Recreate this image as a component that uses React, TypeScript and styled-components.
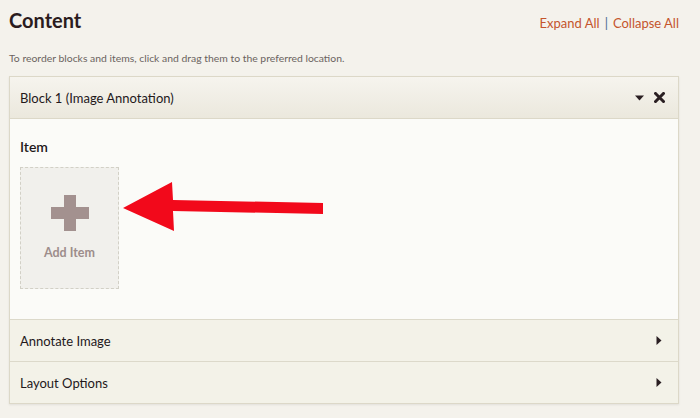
import styled, { createGlobalStyle } from "styled-components";

const GlobalStyle = createGlobalStyle`
  html, body {
    margin: 0;
    padding: 0;
    background: #f4f2ec;
    font-family: Lato, "Open Sans", sans-serif;
  }
`;

const Page = styled.div`
  width: 700px;
  height: 418px;
  box-sizing: border-box;
  padding: 5px 21px 0 9px;
  overflow: hidden;
`;

const TopBar = styled.div`
  display: flex;
  justify-content: space-between;
  align-items: baseline;
`;

const Title = styled.h1`
  margin: 0;
  font-size: 20px;
  line-height: 30px;
  font-weight: 700;
  color: #2b1c1e;
`;

const Links = styled.div`
  font-size: 13px;
  color: #c4552c;
  display: flex;
  gap: 5px;
`;

const Link = styled.a`
  color: inherit;
  text-decoration: none;
  cursor: pointer;
`;

const Divider = styled.span`
  color: #4a6a8c;
`;

const Hint = styled.p`
  margin: 16px 0 0;
  font-size: 10.4px;
  line-height: 14px;
  color: #6b6360;
`;

const Panel = styled.div`
  margin-top: 11px;
  border: 1px solid #dcd8c8;
  box-shadow: 0 1px 2px rgba(0, 0, 0, 0.08);
`;

const PanelHeader = styled.div<{ $flat?: boolean }>`
  display: flex;
  align-items: center;
  justify-content: space-between;
  height: 41px;
  padding: 0 ${(p) => (p.$flat ? 16 : 13)}px 0 10px;
  font-size: 13px;
  color: #23181b;
  background: ${(p) =>
    p.$flat ? "#f3f2e8" : "linear-gradient(#f6f4ee, #ebe8dd)"};
  border-top: ${(p) => (p.$flat ? "1px solid #dcd9ca" : "none")};
  border-bottom: ${(p) => (p.$flat ? "none" : "1px solid #dcd8c8")};
`;

const Controls = styled.div`
  display: flex;
  align-items: center;
  gap: 10px;
`;

const Body = styled.div`
  position: relative;
  height: 200px;
  box-sizing: border-box;
  padding: 19px 10px 0;
  background: #fbfbf8;
`;

const ItemLabel = styled.div`
  font-size: 14px;
  line-height: 18px;
  font-weight: 600;
  color: #23181b;
`;

const AddItem = styled.div`
  margin-top: 11px;
  width: 99px;
  height: 122px;
  box-sizing: border-box;
  border: 1px dashed #d2d0c6;
  background: #f1f0ec;
  display: flex;
  flex-direction: column;
  align-items: center;
  padding-top: 27px;
  gap: 14px;
  font-size: 12.5px;
  font-weight: 700;
  color: #9d8d8b;
`;

const Arrow = styled.svg`
  position: absolute;
  left: 110px;
  top: 60px;
`;

const CaretDown = () => (
  <svg width="9" height="6" viewBox="0 0 9 6">
    <path d="M0 0.5h9L4.5 5.5z" fill="#2a1f22" />
  </svg>
);

const Close = () => (
  <svg width="11" height="11" viewBox="0 0 11 11">
    <path
      d="M1.5 1.5l8 8M9.5 1.5l-8 8"
      stroke="#2a1f22"
      strokeWidth="3"
      strokeLinecap="square"
    />
  </svg>
);

const CaretRight = () => (
  <svg width="6" height="9" viewBox="0 0 6 9">
    <path d="M0.5 0v9L5.5 4.5z" fill="#2a1f22" />
  </svg>
);

const Plus = () => (
  <svg width="38" height="36" viewBox="0 0 38 36">
    <path d="M13 0h12v12h13v12H25v12H13V24H0V12h13z" fill="#a3918f" />
  </svg>
);

export default function App() {
  return (
    <>
      <GlobalStyle />
      <Page>
        <TopBar>
          <Title>Content</Title>
          <Links>
            <Link>Expand All</Link>
            <Divider>|</Divider>
            <Link>Collapse All</Link>
          </Links>
        </TopBar>
        <Hint>To reorder blocks and items, click and drag them to the preferred location.</Hint>
        <Panel>
          <PanelHeader>
            <span>Block 1 (Image Annotation)</span>
            <Controls>
              <CaretDown />
              <Close />
            </Controls>
          </PanelHeader>
          <Body>
            <ItemLabel>Item</ItemLabel>
            <AddItem>
              <Plus />
              <span>Add Item</span>
            </AddItem>
            <Arrow width="220" height="60" viewBox="0 0 220 60">
              <path
                d="M3 29L52 3L53 21L203 24L203 35L53 32L54 52z"
                fill="#f2091b"
              />
            </Arrow>
          </Body>
          <PanelHeader $flat>
            <span>Annotate Image</span>
            <CaretRight />
          </PanelHeader>
          <PanelHeader $flat>
            <span>Layout Options</span>
            <CaretRight />
          </PanelHeader>
        </Panel>
      </Page>
    </>
  );
}
